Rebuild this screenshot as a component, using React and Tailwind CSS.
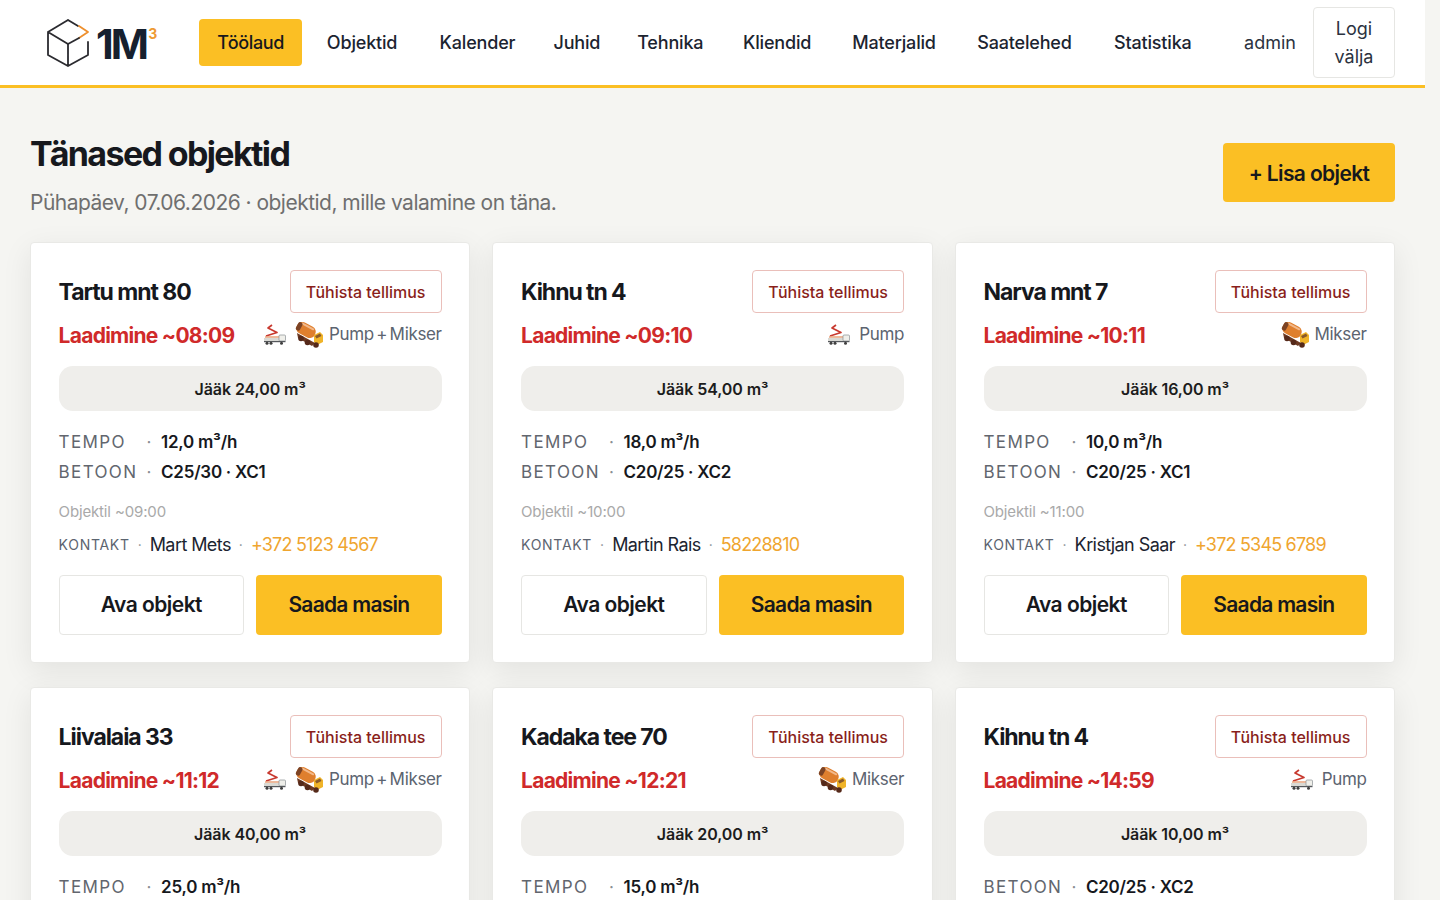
const navItems = [
  { label: "Objektid", width: "w-[110px]" },
  { label: "Kalender", width: "w-[111px]" },
  { label: "Juhid", width: "w-[78px]" },
  { label: "Tehnika", width: "w-[99px]" },
  { label: "Kliendid", width: "w-[105px]" },
  { label: "Materjalid", width: "w-[119px]" },
  { label: "Saatelehed", width: "w-[132px]" },
  { label: "Statistika", width: "w-[115px]" },
];

const objects = [
  { id: 1, name: "Tartu mnt 80", time: "08:09", pump: true, mixer: true, left: "24,00", tempo: "12,0 m³/h", betoon: "C25/30 · XC1", arrive: "09:00", contact: "Mart Mets", phone: "+372 5123 4567" },
  { id: 2, name: "Kihnu tn 4", time: "09:10", pump: true, left: "54,00", tempo: "18,0 m³/h", betoon: "C20/25 · XC2", arrive: "10:00", contact: "Martin Rais", phone: "58228810" },
  { id: 3, name: "Narva mnt 7", time: "10:11", mixer: true, left: "16,00", tempo: "10,0 m³/h", betoon: "C20/25 · XC1", arrive: "11:00", contact: "Kristjan Saar", phone: "+372 5345 6789" },
  { id: 4, name: "Liivalaia 33", time: "11:12", pump: true, mixer: true, left: "40,00", tempo: "25,0 m³/h", betoon: "C30/37 · XC2", arrive: "12:00", contact: "Jaan Tamm", phone: "+372 5567 8901" },
  { id: 5, name: "Kadaka tee 70", time: "12:21", mixer: true, left: "20,00", tempo: "15,0 m³/h", betoon: "C25/30 · XC2", arrive: "13:00", contact: "Peeter Kask", phone: "+372 5234 5678" },
  { id: 6, name: "Kihnu tn 4", time: "14:59", pump: true, left: "10,00", betoon: "C20/25 · XC2", arrive: "15:30", contact: "Martin Rais", phone: "58228810" },
];

function Logo() {
  return (
    <div className="flex items-center">
      <svg width="46" height="50" viewBox="0 0 46 50" fill="none" strokeLinejoin="round" strokeLinecap="round">
        <path d="M22 2 L32 8 M22 2 L2 14 L2 37 L22 48 L42 37 L42 24 M2 14 L22 26 L22 48" stroke="#2b2b30" strokeWidth="1.8" />
        <path d="M33 8 L42 14 L33 20" stroke="#ee8f2d" strokeWidth="1.8" />
        <path d="M22 26 L33 20" stroke="#2b2b30" strokeWidth="1.8" />
      </svg>
      <div className="flex items-start ml-[4px] h-[50px]">
        <span className="text-[41px] leading-[52px] font-bold tracking-[-0.07em] text-[#16202e]">1M</span>
        <span className="text-[14px] leading-[15px] mt-[8px] ml-[2px] font-bold text-[#ee9a33]">3</span>
      </div>
    </div>
  );
}

function PumpIcon() {
  return (
    <svg width="24" height="22" viewBox="0 0 24 22" fill="none">
      <path d="M3 12 L14 8.5 L5 4 L9 1" stroke="#c8392f" strokeWidth="1.7" strokeLinejoin="round" />
      <path d="M2 13 L17 13" stroke="#e8a27a" strokeWidth="1.5" />
      <rect x="1" y="14" width="16" height="3" fill="#d9d9d4" />
      <rect x="16" y="11" width="6.5" height="6" rx="1" fill="#efefea" stroke="#8a8f94" strokeWidth="0.7" />
      <rect x="1" y="17" width="21.5" height="1.2" fill="#55585c" />
      <circle cx="4" cy="19.3" r="1.5" fill="#3f3f3f" />
      <circle cx="8" cy="19.3" r="1.5" fill="#3f3f3f" />
      <circle cx="18.5" cy="19.3" r="1.5" fill="#3f3f3f" />
    </svg>
  );
}

function MixerIcon() {
  return (
    <svg width="29" height="26" viewBox="0 0 29 26" fill="none">
      <path d="M2 11 L20 21 L17 24 L3 16 Z" fill="#6e3a22" />
      <g transform="rotate(28 11 8)">
        <rect x="1" y="2" width="20" height="12" rx="5.5" fill="#df7f2e" />
        <path d="M5 4 L17 4" stroke="#f3b98a" strokeWidth="2" strokeLinecap="round" />
        <rect x="1" y="3.5" width="4.5" height="9" rx="2.2" fill="#7c4324" />
      </g>
      <path d="M19 13 L25 10 L28 13 L28 20 L22 23 L19 20 Z" fill="#f0b429" />
      <path d="M20 14 L25 11.5 L26.5 14 L21.5 16.5 Z" fill="#8a5a2b" />
      <circle cx="6" cy="16.5" r="2.8" fill="#55291a" />
      <circle cx="12.5" cy="20.5" r="2.8" fill="#55291a" />
      <circle cx="21" cy="23" r="2.8" fill="#55291a" />
    </svg>
  );
}

function ObjectCard({ item }) {
  const machineLabel = item.pump && item.mixer ? "Pump + Mikser" : item.pump ? "Pump" : "Mikser";
  return (
    <div className="bg-white border border-[#e9e9e6] rounded-[4px] shadow-[0_8px_30px_rgba(0,0,0,0.08)] pl-[27.6px] pr-[27.4px] pt-[27px] pb-[27px] flex flex-col">
      <div className="flex justify-between items-center h-[43px]">
        <h2 className="pt-[1px] text-[23px] font-bold tracking-[-0.046em] text-[#16181d]">{item.name}</h2>
        <button className="h-[43px] w-[152px] border border-[#eabfba] rounded-[4px] text-[16px] font-medium text-[#8a1f1b]">Tühista tellimus</button>
      </div>
      <div className="flex justify-between items-center h-[30px] mt-[7px]">
        <span className="pt-[1px] text-[21px] font-bold tracking-[-0.035em] text-[#d02a2a]">Laadimine ~{item.time}</span>
        <span className="flex items-center text-[17px] text-[#5c6470] tracking-[-0.02em] [word-spacing:-2px]">
          {item.pump && <span className="mr-[8px]"><PumpIcon /></span>}
          {item.mixer && <span className="mr-[5px]"><MixerIcon /></span>}
          <span>{machineLabel}</span>
        </span>
      </div>
      <div className="h-[45px] mt-[16px] rounded-[14px] bg-[#efeeeb] flex items-center justify-center text-[16px] font-semibold tracking-[-0.005em] text-[#1c1c1c]">
        Jääk {item.left} m³
      </div>
      <div className="mt-[20px] flex flex-col gap-[6px] text-[17px]">
        {item.tempo && <Row label="TEMPO" value={item.tempo} />}
        <Row label="BETOON" value={item.betoon} />
      </div>
      <div className="mt-[15px] text-[15px] leading-[24px] text-[#a9a9a9] tracking-[-0.01em]">Objektil ~{item.arrive}</div>
      <div className="mt-[8px] h-[24px] flex items-center">
        <span className="text-[14px] tracking-[0.05em] text-[#5c6470]">KONTAKT</span>
        <span className="mx-[8px] text-[#8a8f94] text-[14px]">·</span>
        <span className="text-[18px] tracking-[-0.032em] text-[#1c2430]">{item.contact}</span>
        <span className="mx-[8px] text-[#8a8f94] text-[14px]">·</span>
        <span className="text-[18px] tracking-[-0.045em] text-[#efa52f]">{item.phone}</span>
      </div>
      <div className="mt-[19px] grid grid-cols-2 gap-[12px]">
        <button className="h-[60px] rounded-[4px] border border-[#e6e6e3] bg-white text-[21px] font-semibold tracking-[-0.025em] text-[#16181d]">Ava objekt</button>
        <button className="h-[60px] rounded-[4px] bg-[#fbbf24] text-[21px] font-semibold tracking-[-0.035em] text-[#16181d]">Saada masin</button>
      </div>
    </div>
  );
}

function Row({ label, value }) {
  return (
    <div className="flex items-center h-[24px]">
      <span className="w-[88px] tracking-[0.08em] text-[#62666e]">{label}</span>
      <span className="w-[14.5px] text-[#8a8f94]">·</span>
      <span className="font-semibold tracking-[-0.015em] text-[#16181d]">{value}</span>
    </div>
  );
}

export default function App() {
  return (
    <div className="h-[900px] overflow-hidden bg-[#f5f5f2] font-['Inter',sans-serif]">
      <div className="w-[1425px]">
        <header className="h-[88px] bg-white border-b-[3px] border-[#fbbf24] flex items-center pl-[46px] pr-[30px]">
          <Logo />
          <nav className="flex items-center gap-[4.9px] ml-[42px] text-[18px] text-[#1c2430] tracking-[-0.01em]">
            <a className="h-[47px] w-[103px] flex items-center justify-center rounded-[4px] bg-[#fbbf24] font-medium text-[#16181d] tracking-[-0.02em]">Töölaud</a>
            {navItems.map((item) => (
              <a key={item.label} className={`${item.width} h-[47px] flex items-center justify-center font-medium`}>{item.label}</a>
            ))}
          </nav>
          <div className="ml-auto flex items-center gap-[17px]">
            <span className="text-[18px] text-[#2b3240]">admin</span>
            <button className="w-[82px] h-[71px] rounded-[4px] border border-[#e6e6e3] text-[18px] leading-[28px] text-[#2b3240]">Logi<br />välja</button>
          </div>
        </header>
        <main className="px-[30px] pt-[45px]">
          <div className="flex justify-between items-start h-[109px]">
            <div>
              <h1 className="text-[34px] leading-[42px] font-bold tracking-[-0.048em] text-[#16181d]">Tänased objektid</h1>
              <p className="mt-[14px] text-[21px] leading-[28px] tracking-[-0.025em] text-[#6f6f6f]">Pühapäev, 07.06.2026 · objektid, mille valamine on täna.</p>
            </div>
            <button className="mt-[10px] pt-[2px] w-[172px] h-[59px] rounded-[4px] bg-[#fbbf24] text-[21px] font-semibold tracking-[-0.03em] text-[#16181d]">+ Lisa objekt</button>
          </div>
          <div className="grid grid-cols-3 gap-x-[22.4px] gap-y-[24px]">
            {objects.map((item) => (
              <ObjectCard key={item.id} item={item} />
            ))}
          </div>
        </main>
      </div>
    </div>
  );
}
